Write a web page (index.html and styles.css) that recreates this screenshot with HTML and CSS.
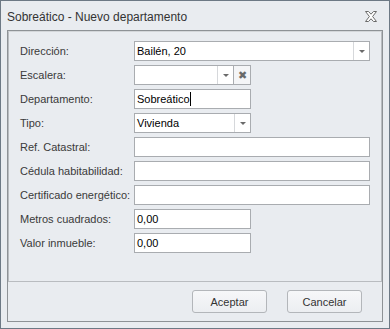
FILE: index.html
```html
<!DOCTYPE html>
<html lang="es">
<head>
  <meta charset="UTF-8">
  <title>Sobreático - Nuevo departamento</title>
  <link rel="stylesheet" href="styles.css">
</head>
<body>

  <div class="window">
    <div class="titlebar">
      <span class="title">Sobreático - Nuevo departamento</span>
      <svg class="close" width="12" height="11" viewBox="0 0 12 11">
        <path d="M0.5 0.5 H3.5 L6 3.2 L8.5 0.5 H11.5 L7.6 5.5 L11.5 10.5 H8.5 L6 7.8 L3.5 10.5 H0.5 L4.4 5.5 Z" fill="#fff" stroke="#6a6a6a" stroke-width="1" stroke-linejoin="round"/>
      </svg>
    </div>

    <div class="frame">
      <div class="panel">
        <label>Dirección:</label>
        <div class="combo wide">
          <span class="value">Bailén, 20</span>
          <span class="arrow"></span>
        </div>

        <label>Escalera:</label>
        <div class="combo-group">
          <div class="combo narrow">
            <span class="value"></span>
            <span class="arrow"></span>
          </div>
          <span class="clear">&#x2716;</span>
        </div>

        <label>Departamento:</label>
        <div class="field mid"><span class="value">Sobreático<span class="caret"></span></span></div>

        <label>Tipo:</label>
        <div class="combo mid">
          <span class="value">Vivienda</span>
          <span class="arrow"></span>
        </div>

        <label>Ref. Catastral:</label>
        <div class="field wide"></div>

        <label>Cédula habitabilidad:</label>
        <div class="field wide"></div>

        <label>Certificado energético:</label>
        <div class="field wide"></div>

        <label>Metros cuadrados:</label>
        <div class="field mid"><span class="value">0,00</span></div>

        <label>Valor inmueble:</label>
        <div class="field mid"><span class="value">0,00</span></div>
      </div>

      <div class="buttons">
        <button>Aceptar</button>
        <button>Cancelar</button>
      </div>
    </div>
  </div>

</body>
</html>
```

FILE: styles.css
```css
:root {
  --bg: #e9ecf0;
  --border: #a9acb0;
  --text: #3a3a3a;
}
* {
  margin: 0;
  padding: 0;
  box-sizing: border-box;
}
body {
  font-family: 'Liberation Sans', Arial, sans-serif;
  font-size: 11px;
  color: var(--text);
  background: var(--bg);
}

.window {
  width: 390px;
  height: 329px;
  border: 1px solid #6d7985;
  background: var(--bg);
}

.titlebar {
  height: 29px;
  display: flex;
  align-items: center;
  justify-content: space-between;
  padding: 2px 12px 0 6px;
}
.title {
  font-size: 12px;
  color: #333;
}

.frame {
  margin: 0 6px;
  height: 292px;
  border: 1px solid #8e9296;
}

.panel {
  height: 251px;
  border: 1px solid #b9bcc0;
  border-top-color: #d4d7da;
  padding: 9px 0 0 11px;
  display: grid;
  grid-template-columns: 114px 1fr;
  grid-auto-rows: 20px;
  row-gap: 4px;
  align-items: center;
}
.panel label {
  color: var(--text);
}

.field,
.combo {
  height: 20px;
  background: #fff;
  border: 1px solid var(--border);
  display: flex;
  align-items: center;
  color: #000;
}
.value {
  flex: 1;
  padding-left: 2px;
  white-space: nowrap;
}
.wide { width: 236px; }
.mid { width: 117px; }
.narrow { width: 100px; }

.caret {
  display: inline-block;
  width: 1px;
  height: 14px;
  background: #000;
  vertical-align: -3px;
}

.arrow {
  width: 16px;
  height: 100%;
  border-left: 1px solid #d6d8db;
  display: flex;
  align-items: center;
  justify-content: center;
}
.arrow::after {
  content: '';
  border-left: 3px solid transparent;
  border-right: 3px solid transparent;
  border-top: 3px solid #6a6a6a;
}

.combo-group {
  display: flex;
}
.clear {
  width: 17px;
  height: 20px;
  border: 1px solid var(--border);
  border-left: none;
  background: #f4f5f7;
  color: #6a6a6a;
  font-size: 11px;
  display: flex;
  align-items: center;
  justify-content: center;
}

.buttons {
  display: flex;
  justify-content: flex-end;
  gap: 20px;
  padding: 8px 20px 0 0;
}
button {
  width: 75px;
  height: 23px;
  font-family: inherit;
  font-size: 11px;
  color: #333;
  background: linear-gradient(#f6f7f9, #eceef1);
  border: 1px solid #b3b6ba;
  border-radius: 3px;
}
```
